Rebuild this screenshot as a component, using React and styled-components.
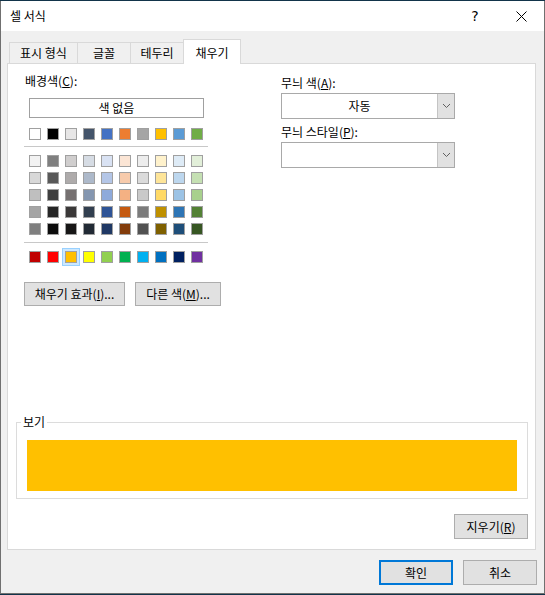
import styled, { createGlobalStyle } from "styled-components";

const GlobalStyle = createGlobalStyle`
  html, body {
    margin: 0;
    padding: 0;
    background: #12344a;
  }
  body {
    font-family: "Noto Sans CJK KR", "Noto Sans", sans-serif;
    font-size: 12px;
    color: #000;
  }
  * { box-sizing: border-box; }
`;

const Window = styled.div`
  width: 545px;
  height: 593px;
  margin-top: 1px;
  border: 1px solid #707070;
  border-top: none;
  background: #f0f0f0;
  display: flex;
  flex-direction: column;
`;

const TitleBar = styled.div`
  height: 30px;
  background: #fff;
  display: flex;
  align-items: center;
  padding-left: 9px;
`;

const Title = styled.div`
  flex: 1;
  line-height: 16px;
`;

const CaptionButton = styled.div`
  width: 46px;
  height: 30px;
  display: flex;
  align-items: center;
  justify-content: center;
  font-family: "DejaVu Sans", sans-serif;
  font-size: 14px;
`;

const Body = styled.div`
  flex: 1;
  display: flex;
  flex-direction: column;
  padding: 8px 8px 0 6px;
`;

const TabStrip = styled.div`
  display: flex;
  align-items: flex-end;
  height: 24px;
  padding-left: 2px;
`;

const Tab = styled.div`
  width: ${(p) => p.$w}px;
  height: ${(p) => (p.$active ? 25 : 21)}px;
  margin-left: -1px;
  margin-bottom: ${(p) => (p.$active ? -1 : 0)}px;
  border: 1px solid #d9d9d9;
  border-bottom: none;
  background: ${(p) => (p.$active ? "#fff" : "#f0f0f0")};
  position: relative;
  z-index: ${(p) => (p.$active ? 1 : 0)};
  display: flex;
  align-items: center;
  justify-content: center;
  padding-top: ${(p) => (p.$active ? 1 : 0)}px;
  line-height: 16px;
  &:first-child { margin-left: 0; }
`;

const Panel = styled.div`
  width: 529px;
  height: 487px;
  border: 1px solid #d9d9d9;
  background: #fff;
  display: flex;
  flex-direction: column;
`;

const TopSection = styled.div`
  display: flex;
`;

const LeftColumn = styled.div`
  margin-left: 16px;
  width: 184px;
  flex-shrink: 0;
  padding-top: 9px;
  display: flex;
  flex-direction: column;
`;

const RightColumn = styled.div`
  margin-left: 73px;
  width: 174px;
  flex-shrink: 0;
  padding-top: 11px;
  display: flex;
  flex-direction: column;
`;

const Label = styled.div`
  line-height: 16px;
  padding-left: ${(p) => p.$indent || 0}px;
  margin-top: ${(p) => p.$top || 0}px;
  white-space: nowrap;
`;

const NoColorBox = styled.div`
  margin: 9px 0 0 5px;
  width: 175px;
  height: 20px;
  border: 1px solid #a0a0a0;
  display: flex;
  align-items: center;
  justify-content: center;
  line-height: 16px;
`;

const SwatchRow = styled.div`
  display: flex;
  gap: 6px;
  padding-left: 5px;
  margin-top: ${(p) => p.$top || 0}px;
`;

const SwatchGrid = styled.div`
  display: flex;
  flex-direction: column;
  gap: 5px;
  margin-top: 8px;
`;

const Swatch = styled.div`
  width: 12px;
  height: 12px;
  flex-shrink: 0;
  border: 1px solid #a0a0a0;
  background: ${(p) => p.$color};
  box-shadow: ${(p) =>
    p.$selected ? "0 0 0 2px #cce8ff, 0 0 0 3px #99d1ff" : "none"};
`;

const Separator = styled.div`
  height: 1px;
  background: #c8c8c8;
  margin-top: ${(p) => p.$top}px;
`;

const ButtonRow = styled.div`
  display: flex;
  gap: 10px;
  margin-top: 19px;
`;

const Button = styled.div`
  width: ${(p) => p.$w}px;
  height: ${(p) => p.$h || 24}px;
  flex-shrink: 0;
  background: #e1e1e1;
  border: ${(p) => (p.$default ? "2px solid #0078d7" : "1px solid #adadad")};
  display: flex;
  align-items: center;
  justify-content: center;
  line-height: 16px;
  white-space: nowrap;
`;

const Combo = styled.div`
  margin-top: 2px;
  height: 26px;
  border: 1px solid #a9a9a9;
  background: #fff;
  display: flex;
`;

const ComboValue = styled.div`
  flex: 1;
  display: flex;
  align-items: center;
  justify-content: center;
  line-height: 16px;
`;

const ComboArrow = styled.div`
  width: 17px;
  background: #e1e1e1;
  border-left: 1px solid #c4c4c4;
  display: flex;
  align-items: center;
  justify-content: center;
`;

const Preview = styled.div`
  position: relative;
  margin: auto 0 0 8px;
  width: 512px;
  border: 1px solid #dcdcdc;
  padding: 17px 10px 7px 10px;
`;

/* caption sits over the group's top border */
const PreviewCaption = styled.div`
  position: absolute;
  top: -9px;
  left: 4px;
  padding: 0 2px;
  background: #fff;
  line-height: 16px;
`;

const PreviewFill = styled.div`
  height: 51px;
  background: ${(p) => p.$color};
`;

const ClearRow = styled.div`
  display: flex;
  justify-content: flex-end;
  padding: 15px 7px 10px 0;
`;

const Footer = styled.div`
  display: flex;
  justify-content: flex-end;
  gap: 10px;
  margin: 10px -1px 0 0;
`;

const Acc = styled.span`
  text-decoration: underline;
`;

const baseColors = [
  "#ffffff", "#000000", "#e7e6e6", "#44546a", "#4472c4",
  "#ed7d31", "#a5a5a5", "#ffc000", "#5b9bd5", "#70ad47",
];

const themeRows = [
  ["#f2f2f2", "#7f7f7f", "#d0cece", "#d6dce4", "#d9e2f3", "#fbe5d5", "#ededed", "#fff2cc", "#deebf6", "#e2efd9"],
  ["#d8d8d8", "#595959", "#aeabab", "#adb9ca", "#b4c6e7", "#f7cbac", "#dbdbdb", "#fee599", "#bdd7ee", "#c5e0b3"],
  ["#bfbfbf", "#3f3f3f", "#757070", "#8496b0", "#8eaadb", "#f4b183", "#c9c9c9", "#ffd965", "#9cc3e5", "#a8d08d"],
  ["#a5a5a5", "#262626", "#3a3838", "#323f4f", "#2f5496", "#c55a11", "#7b7b7b", "#bf9000", "#2e75b5", "#538135"],
  ["#7f7f7f", "#0c0c0c", "#171616", "#222a35", "#1f3864", "#833c0b", "#525252", "#7f6000", "#1e4e79", "#375623"],
];

const standardColors = [
  "#c00000", "#ff0000", "#ffc000", "#ffff00", "#92d050",
  "#00b050", "#00b0f0", "#0070c0", "#002060", "#7030a0",
];

const tabs = [
  { label: "표시 형식", w: 69 },
  { label: "글꼴", w: 54 },
  { label: "테두리", w: 54 },
  { label: "채우기", w: 58, active: true },
];

function Chevron() {
  return (
    <svg width="9" height="6" viewBox="0 0 9 6">
      <path d="M1 1 L4.5 4.5 L8 1" fill="none" stroke="#606060" strokeWidth="1" />
    </svg>
  );
}

function CloseIcon() {
  return (
    <svg width="11" height="11" viewBox="0 0 11 11">
      <path d="M0.5 0.5 L10.5 10.5 M10.5 0.5 L0.5 10.5" stroke="#000" strokeWidth="1" />
    </svg>
  );
}

export default function App() {
  const selected = "#ffc000";

  return (
    <>
      <GlobalStyle />
      <Window>
        <TitleBar>
          <Title>셀 서식</Title>
          <CaptionButton>?</CaptionButton>
          <CaptionButton>
            <CloseIcon />
          </CaptionButton>
        </TitleBar>

        <Body>
          <TabStrip>
            {tabs.map((t) => (
              <Tab key={t.label} $w={t.w} $active={t.active}>
                {t.label}
              </Tab>
            ))}
          </TabStrip>

          <Panel>
            <TopSection>
              <LeftColumn>
                <Label $indent={1}>
                  배경색(<Acc>C</Acc>):
                </Label>
                <NoColorBox>색 없음</NoColorBox>

                <SwatchRow $top={10}>
                  {baseColors.map((c) => (
                    <Swatch key={c} $color={c} />
                  ))}
                </SwatchRow>

                <Separator $top={6} />

                <SwatchGrid>
                  {themeRows.map((row, i) => (
                    <SwatchRow key={i}>
                      {row.map((c, j) => (
                        <Swatch key={j} $color={c} />
                      ))}
                    </SwatchRow>
                  ))}
                </SwatchGrid>

                <Separator $top={7} />

                <SwatchRow $top={8}>
                  {standardColors.map((c, i) => (
                    <Swatch key={c} $color={c} $selected={c === selected && i === 2} />
                  ))}
                </SwatchRow>

                <ButtonRow>
                  <Button $w={101}>
                    채우기 효과(<Acc>I</Acc>)...
                  </Button>
                  <Button $w={86}>
                    다른 색(<Acc>M</Acc>)...
                  </Button>
                </ButtonRow>
              </LeftColumn>

              <RightColumn>
                <Label>
                  무늬 색(<Acc>A</Acc>):
                </Label>
                <Combo>
                  <ComboValue>자동</ComboValue>
                  <ComboArrow>
                    <Chevron />
                  </ComboArrow>
                </Combo>
                <Label $top={5}>
                  무늬 스타일(<Acc>P</Acc>):
                </Label>
                <Combo>
                  <ComboValue />
                  <ComboArrow>
                    <Chevron />
                  </ComboArrow>
                </Combo>
              </RightColumn>
            </TopSection>

            <Preview>
              <PreviewCaption>보기</PreviewCaption>
              <PreviewFill $color={selected} />
            </Preview>

            <ClearRow>
              <Button $w={74} $h={25}>
                지우기(<Acc>R</Acc>)
              </Button>
            </ClearRow>
          </Panel>

          <Footer>
            <Button $w={74} $h={25} $default>
              확인
            </Button>
            <Button $w={74} $h={25}>
              취소
            </Button>
          </Footer>
        </Body>
      </Window>
    </>
  );
}
